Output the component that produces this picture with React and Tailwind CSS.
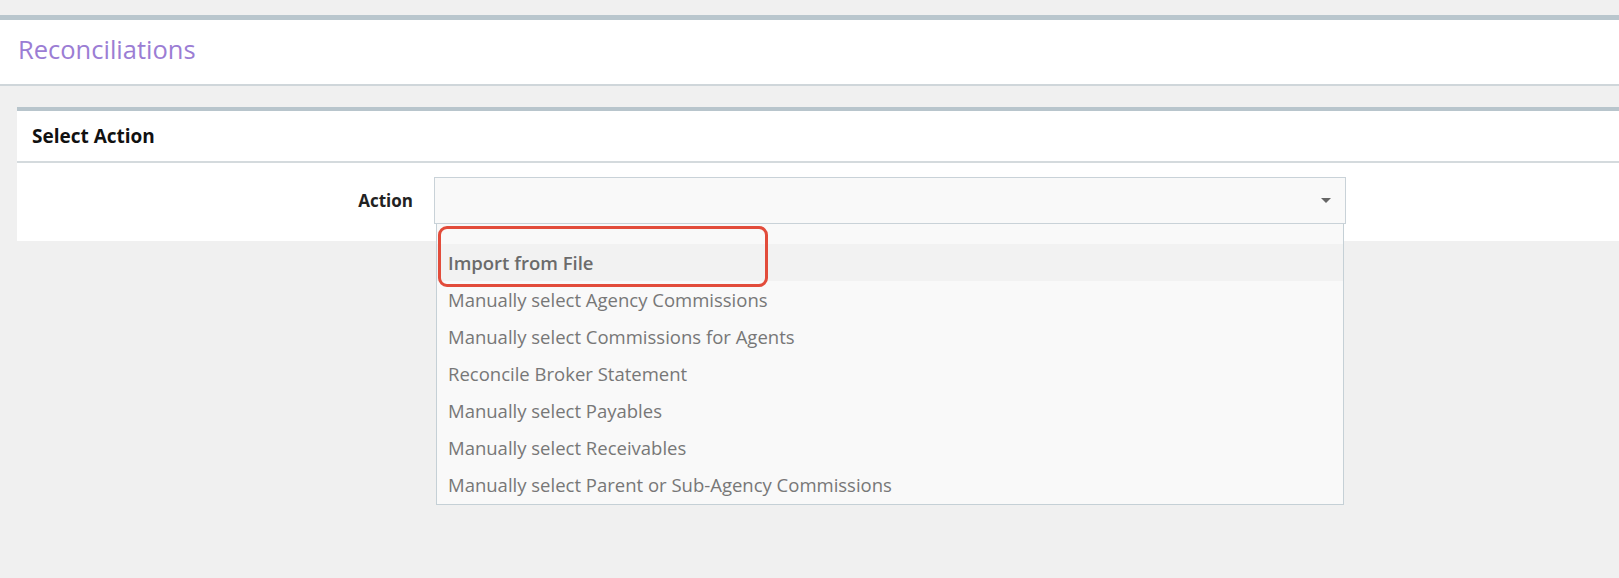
import React from 'react';

const options = [
  'Manually select Agency Commissions',
  'Manually select Commissions for Agents',
  'Reconcile Broker Statement',
  'Manually select Payables',
  'Manually select Receivables',
  'Manually select Parent or Sub-Agency Commissions',
];

export default function App() {
  return (
    <div className="min-h-screen bg-[#f0f0f0] pt-[15px] font-['Open_Sans',sans-serif]">
      {/* page header */}
      <div className="h-[71px] border-t-[5px] border-b-2 border-[#b9c6cd] border-b-[#cfd6da] bg-white pl-[18px] pb-[5px] flex items-center">
        <h1 className="text-[25.5px] text-[#9b7dd4] leading-none">Reconciliations</h1>
      </div>

      {/* panel */}
      <div className="mt-[21px] ml-[17px] border-t-4 border-[#b8c5cc] bg-white">
        <div className="h-[52px] border-b-2 border-[#d4dadd] pl-[15px] flex items-center">
          <h2 className="text-[19px] font-bold text-[#111]">Select Action</h2>
        </div>
        <div className="flex items-center pt-[14px] pb-[17px]">
          <label className="w-[396px] text-right text-[17px] font-bold text-[#222]">Action</label>
          <div className="relative ml-[21px] w-[912px]">
            <div className="h-[47px] border border-[#c9d2d8] bg-[#f9f9f9] flex items-center justify-end pr-[14px]">
              <span className="w-0 h-0 border-l-[5px] border-r-[5px] border-t-[5px] border-l-transparent border-r-transparent border-t-[#666]" />
            </div>
            {/* open dropdown */}
            <div className="absolute left-[2px] top-[47px] w-[908px] z-10 border border-t-0 border-[#c5d0d6] bg-[#f9f9f9] text-[18.5px] pb-[1px]">
              <div className="h-[20px]" />
              <div className="relative h-[37px] bg-[#f2f2f2] pl-[11px] flex items-center font-semibold text-[#6b6b6b]">
                Import from File
              </div>
              {options.map((o) => (
                <div key={o} className="h-[37px] pl-[11px] flex items-center text-[#777]">
                  {o}
                </div>
              ))}
              <div className="absolute left-[1px] top-[2px] w-[330px] h-[61px] border-[3px] border-[#e24c3b] rounded-[9px] pointer-events-none" />
            </div>
          </div>
        </div>
      </div>
    </div>
  );
}
